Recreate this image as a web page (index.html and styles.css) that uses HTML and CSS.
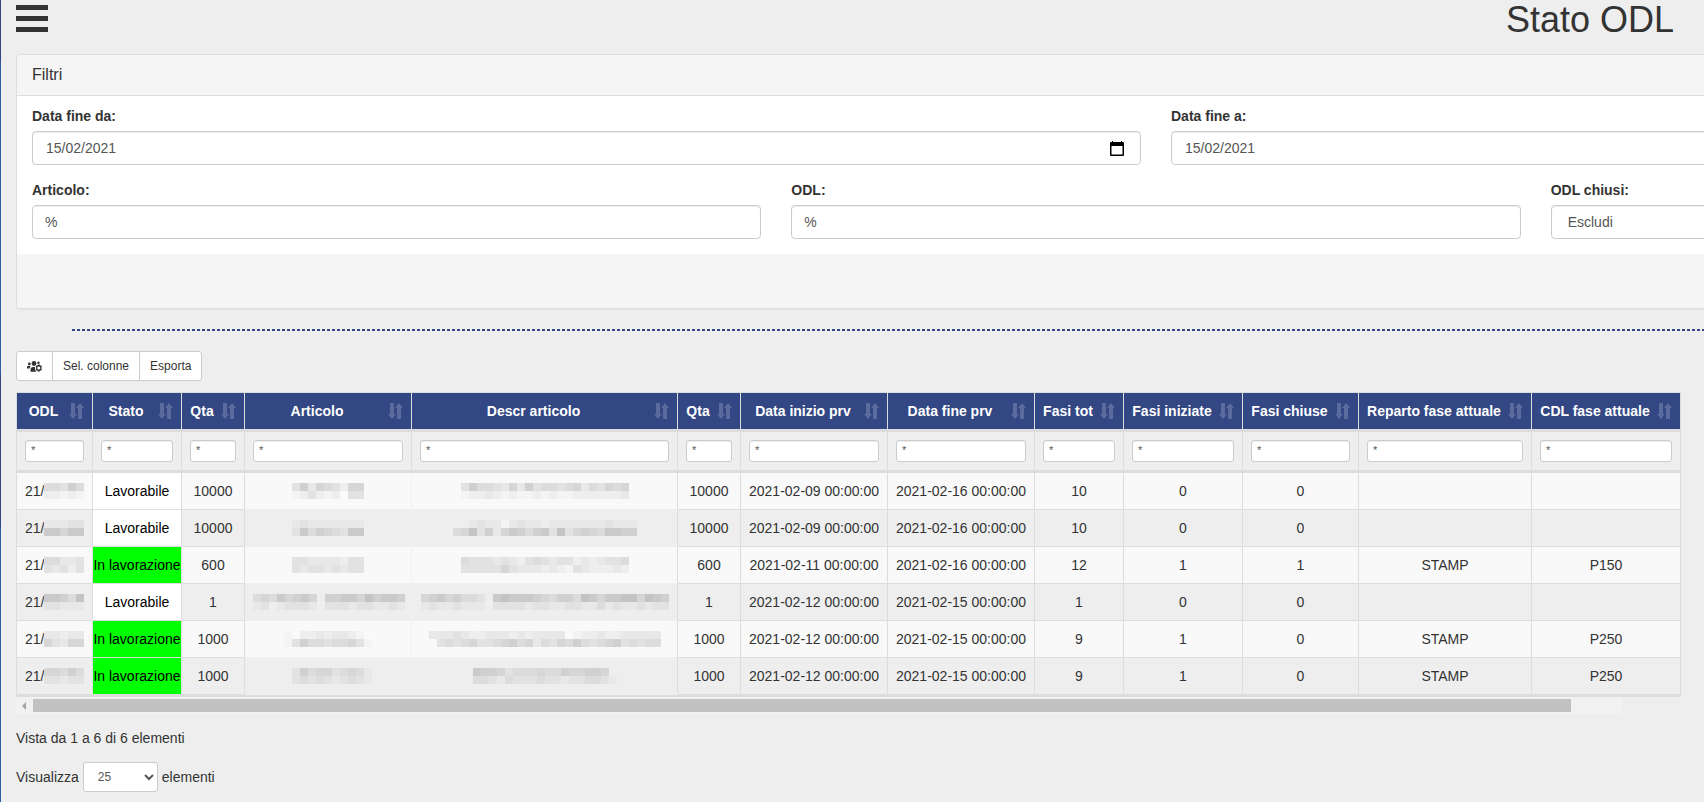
FILE: index.html
```
<!DOCTYPE html>
<html lang="it">
<head>
    <meta charset="UTF-8">
    <meta name="viewport" content="width=device-width, initial-scale=1.0">
    <title>Stato ODL</title>
    <link rel="stylesheet" href="styles.css">
</head>
<body>
    <svg class="sprite" aria-hidden="true">
        <symbol id="icon-sort" viewBox="0 0 15 16">
            <path d="M2 0h4v11h2l-4 5-4-5h2zM9 16V5H7l4-5 4 5h-2v11z"/>
        </symbol>
        <symbol id="icon-calendar" viewBox="0 0 14 15">
            <path d="M2 0h1v1h8V0h1v1h1a1 1 0 0 1 1 1v12a1 1 0 0 1-1 1H1a1 1 0 0 1-1-1V2a1 1 0 0 1 1-1h1zM1.500 5v8.500h11V5z"/>
        </symbol>
    </svg>

    <div class="page">
        <header class="page-header">
            <button type="button" class="menu-toggle" aria-label="Menu">
                <svg width="32" height="28" viewBox="0 0 32 28"><path d="M0 0h32v5H0zM0 11h32v5H0zM0 22h32v5H0z"/></svg>
            </button>
            <h1>Stato ODL</h1>
        </header>

        <!-- Filters -->
        <form class="panel">
            <div class="panel-heading">Filtri</div>
            <div class="panel-body">
                <div class="row">
                    <div class="form-group">
                        <label for="dataDa">Data fine da:</label>
                        <div class="form-control date-control">
                            <input type="text" id="dataDa" value="15/02/2021">
                            <button type="button" aria-label="Apri calendario"><svg width="14" height="15"><use href="#icon-calendar"/></svg></button>
                        </div>
                    </div>
                    <div class="form-group">
                        <label for="dataA">Data fine a:</label>
                        <div class="form-control date-control">
                            <input type="text" id="dataA" value="15/02/2021">
                            <button type="button" aria-label="Apri calendario"><svg width="14" height="15"><use href="#icon-calendar"/></svg></button>
                        </div>
                    </div>
                </div>
                <div class="row">
                    <div class="form-group">
                        <label for="articolo">Articolo:</label>
                        <input type="text" class="form-control" id="articolo" value="%">
                    </div>
                    <div class="form-group">
                        <label for="odl">ODL:</label>
                        <input type="text" class="form-control" id="odl" value="%">
                    </div>
                    <div class="form-group">
                        <label for="chiusi">ODL chiusi:</label>
                        <select class="form-control" id="chiusi">
                            <option>Escludi</option>
                            <option>Includi</option>
                        </select>
                    </div>
                </div>
            </div>
            <div class="panel-footer"></div>
        </form>

        <div class="separator"></div>

        <div class="btn-group">
            <button type="button" aria-label="Impostazioni utenti">
                <svg width="15" height="11" viewBox="0 0 15 11">
                    <circle cx="2.300" cy="3" r="1.400"/>
                    <circle cx="7" cy="2.500" r="2.400"/>
                    <circle cx="11.500" cy="1.800" r="1.200"/>
                    <path d="M0 7.500V6q0-1 1.200-1H3.500L2.700 7.500zM3.500 10.800V8.500q0-2.500 2.300-2.500H8v2.500l1.300 2.300z"/>
                    <path fill-rule="evenodd" d="M10.800 3.500h2l.2 1 1-.3 1 1.700-.7.800v.6l.7.800-1 1.700-1-.3-.2 1h-2l-.2-1-1 .3-1-1.700.7-.8v-.6l-.7-.8 1-1.700 1 .3zM11.800 5.400a1.600 1.600 0 1 0 0 3.200 1.600 1.600 0 1 0 0-3.200z"/>
                </svg>
            </button>
            <button type="button">Sel. colonne</button>
            <button type="button">Esporta</button>
        </div>

        <table class="odl-table" id="odlTable">
            <colgroup>
                <col class="c-odl"><col class="c-stato"><col class="c-qta"><col class="c-articolo"><col class="c-descr"><col class="c-qta"><col class="c-data"><col class="c-data"><col class="c-tot"><col class="c-iniziate"><col class="c-chiuse"><col class="c-reparto"><col class="c-cdl">
            </colgroup>
            <thead>
                <tr class="titles" id="titles"></tr>
                <tr class="filters" id="filters"></tr>
            </thead>
            <tbody id="odlBody"></tbody>
        </table>
        <div class="scrollbar">
            <span class="scroll-arrow"></span>
            <span class="scroll-thumb"></span>
        </div>

        <p class="table-info">Vista da 1 a 6 di 6 elementi</p>
        <div class="table-length">
            <label for="length">Visualizza</label>
            <select id="length">
                <option>10</option>
                <option selected>25</option>
                <option>50</option>
            </select>
            <span>elementi</span>
        </div>
    </div>

    <script>
        const columns = ['ODL', 'Stato', 'Qta', 'Articolo', 'Descr articolo', 'Qta', 'Data inizio prv', 'Data fine prv',
            'Fasi tot', 'Fasi iniziate', 'Fasi chiuse', 'Reparto fase attuale', 'CDL fase attuale'];

        // odl, articolo and descr are masked: two lines of shades, one digit per tile (0 light, 9 dark)
        const rows = [
            { odl: ['55475', '22121'], green: false, qta: 10000, articolo: ['473654266', '124212044'],
              descr: ['475543637455456354656', '122321211212112222223'], start: '2021-02-09', end: '2021-02-16', phases: [10, 0, 0], dept: '', cdl: '' },
            { odl: ['33344', '88688'], green: false, qta: 10000, articolo: ['343333333', '485765488'],
              descr: ['.2343313433233333334333', '56947368757849467658877'], start: '2021-02-09', end: '2021-02-16', phases: [10, 0, 0], dept: '', cdl: '' },
            { odl: ['55334', '43424'], green: true, qta: 600, articolo: ['443333244', '434434344'],
              descr: ['544434324543442323445', '444446433323214322232'], start: '2021-02-11', end: '2021-02-16', phases: [12, 1, 1], dept: 'STAMP', cdl: 'P150' },
            { odl: ['88759', '44333'], green: false, qta: 1, articolo: ['5658678627788697887', '3423444324443443343'],
              descr: ['6786755428988876577598688996987', '3433433324444344334433534334344'], start: '2021-02-12', end: '2021-02-15', phases: [1, 0, 0], dept: '', cdl: '' },
            { odl: ['33233', '64366'], green: true, qta: 1000, articolo: ['10223233210', '14755455641'],
              descr: ['33343223332323333012232233333', '.4545644567563546575456745455'], start: '2021-02-12', end: '2021-02-15', phases: [9, 1, 0], dept: 'STAMP', cdl: 'P250' },
            { odl: ['66575', '44344'], green: true, qta: 1000, articolo: ['24756645653', '.4545434543'],
              descr: ['87764555655766776.', '554354445443445543'], start: '2021-02-12', end: '2021-02-15', phases: [9, 1, 0], dept: 'STAMP', cdl: 'P250' }
        ];

        function mask(lines) {
            const size = 8;
            let tiles = '';
            lines.forEach((line, y) => {
                [...line].forEach((shade, x) => {
                    if (shade === '.') return;
                    const g = 250 - shade * 6;
                    tiles += `<rect x="${x * size}" y="${y * size}" width="${size}" height="${size}" fill="rgb(${g},${g},${g})"/>`;
                });
            });
            return `<svg class="mask" width="${lines[0].length * size}" height="16" aria-hidden="true">${tiles}</svg>`;
        }

        document.getElementById('titles').innerHTML = columns.map(name =>
            `<th scope="col"><div class="title"><span>${name}</span><svg width="15" height="16"><use href="#icon-sort"/></svg></div></th>`
        ).join('');

        document.getElementById('filters').innerHTML = columns.map(name =>
            `<td><input type="text" value="*" aria-label="Filtro ${name}"></td>`
        ).join('');

        document.getElementById('odlBody').innerHTML = rows.map(r => `
            <tr>
                <td class="odl"><div>21/${mask(r.odl)}</div></td>
                <td class="stato ${r.green ? 'in-lavorazione' : ''}">${r.green ? 'In lavorazione' : 'Lavorabile'}</td>
                <td>${r.qta}</td>
                <td class="masked">${mask(r.articolo)}</td>
                <td class="masked last">${mask(r.descr)}</td>
                <td>${r.qta}</td>
                <td>${r.start} 00:00:00</td>
                <td>${r.end} 00:00:00</td>
                ${r.phases.map(n => `<td>${n}</td>`).join('')}
                <td>${r.dept}</td>
                <td>${r.cdl}</td>
            </tr>`).join('');
    </script>
</body>
</html>
```
FILE: styles.css
```
/* General styling */
* {
    box-sizing: border-box;
}

html {
    overflow-x: hidden;
}

body {
    font-family: "Liberation Sans", Arial, sans-serif;
    font-size: 14px;
    line-height: 20px;
    color: #333;
    background-color: #eee;
    margin: 0;
    overflow-x: hidden;
}

input, select, button {
    font-family: inherit;
}

.sprite {
    display: none;
}

/* thin strip of the closed side menu on the left */
.page {
    min-height: 100vh;
    padding: 0 15px 0 16px;
    background: linear-gradient(#334785 0 61px, #2f5ba5 61px 374px, #334785 374px 527px, #2f5ba5 527px) no-repeat left top / 1px 100%;
}

.page-header {
    display: flex;
    justify-content: space-between;
    align-items: flex-start;
    height: 54px;
    padding-right: 15px;
}

.menu-toggle {
    padding: 5px 0 0;
    border: none;
    background: none;
    cursor: pointer;
}

.menu-toggle svg {
    display: block;
    fill: #333;
}

h1 {
    margin: 0;
    font-size: 36px;
    font-weight: normal;
    line-height: 40px;
}

/* Filters panel, wider than the window */
.panel {
    width: calc(100% + 607px);
    border: 1px solid #ddd;
    border-radius: 4px;
    background-color: #fff;
    box-shadow: 0 1px 1px rgba(0, 0, 0, 0.05);
}

.panel-heading {
    padding: 10px 15px;
    font-size: 16px;
    background-color: #f5f5f5;
    border-bottom: 1px solid #ddd;
    border-radius: 3px 3px 0 0;
}

.panel-body {
    padding: 10px 15px 0;
}

.panel-footer {
    height: 54px;
    background-color: #f5f5f5;
    border-radius: 0 0 3px 3px;
}

.row {
    display: flex;
    gap: 30px;
}

.form-group {
    flex: 1;
    margin-bottom: 15px;
}

.form-group label {
    display: block;
    margin-bottom: 5px;
    font-weight: bold;
}

.form-control {
    display: block;
    width: 100%;
    height: 34px;
    padding: 6px 12px;
    font-size: 14px;
    color: #555;
    background-color: #fff;
    border: 1px solid #ccc;
    border-radius: 4px;
    box-shadow: inset 0 1px 1px rgba(0, 0, 0, 0.075);
}

.date-control {
    display: flex;
    align-items: center;
    padding: 0 16px 0 13px;
}

.date-control input {
    flex: 1;
    padding: 0;
    font-size: 14px;
    color: #555;
    border: none;
    background: none;
}

.date-control button {
    padding: 0;
    border: none;
    background: none;
}

.date-control svg {
    display: block;
}

.separator {
    width: calc(100% + 607px);
    height: 2px;
    margin: 20px 0 20px 56px;
    background: repeating-linear-gradient(to right, #334785 0 3px, transparent 3px 5px);
}

/* Toolbar */
.btn-group {
    display: flex;
    margin-bottom: 11px;
}

.btn-group button {
    height: 30px;
    padding: 5px 10px;
    font-size: 12px;
    color: #333;
    background-color: #fff;
    border: 1px solid #ccc;
    cursor: pointer;
}

.btn-group button + button {
    margin-left: -1px;
}

.btn-group button:first-child {
    border-radius: 3px 0 0 3px;
}

.btn-group button:last-child {
    border-radius: 0 3px 3px 0;
}

.btn-group svg {
    display: block;
    fill: #333;
}

/* Table */
.odl-table {
    width: 1665px;
    table-layout: fixed;
    border-collapse: separate;
    border-spacing: 0;
    border: solid #ddd;
    border-width: 1px 0 2px 1px;
}

.c-odl { width: 76px; }
.c-stato { width: 89px; }
.c-qta { width: 63px; }
.c-articolo { width: 167px; }
.c-descr { width: 266px; }
.c-data { width: 147px; }
.c-tot { width: 89px; }
.c-iniziate { width: 119px; }
.c-chiuse { width: 116px; }
.c-reparto { width: 173px; }
.c-cdl { width: 149px; }

th, td {
    padding: 8px;
    text-align: center;
    white-space: nowrap;
    border-right: 1px solid #ddd;
    border-bottom: 1px solid #ddd;
}

.titles th {
    color: #fff;
    background-color: #334785;
    border-bottom-width: 3px;
}

.title {
    display: flex;
    align-items: center;
    gap: 7px;
}

.title span {
    flex: 1;
}

.title svg {
    flex: none;
    fill: rgba(255, 255, 255, 0.2);
}

.filters td {
    border-bottom-width: 3px;
}

.filters input {
    display: block;
    width: 100%;
    height: 22px;
    padding: 0 5px 2px;
    font-size: 11px;
    color: #555;
    background-color: #fff;
    border: 1px solid #ccc;
    border-radius: 3px;
    box-shadow: inset 0 1px 1px rgba(0, 0, 0, 0.075);
}

tbody tr:nth-child(odd) {
    background-color: #f9f9f9;
}

tbody td {
    height: 37px;
}

.odl div {
    display: flex;
    align-items: center;
}

.mask {
    display: block;
    flex: none;
    margin: 0 auto;
    shape-rendering: crispEdges;
}

.odl .mask {
    margin: 0;
}

tbody .stato {
    padding: 8px 0;
    color: #000;
    background-color: #fff;
}

tbody .in-lavorazione {
    background-color: #0f0;
}

.masked {
    border-color: #f0f0f0;
}

.masked.last {
    border-right-color: #ddd;
}

/* Horizontal scrollbar */
.scrollbar {
    display: flex;
    align-items: center;
    width: 96%;
    height: 17px;
    background-color: #f1f1f1;
}

.scroll-arrow {
    margin: 0 7px 0 6px;
    border: solid transparent;
    border-width: 4px 4px 4px 0;
    border-right-color: #a3a3a3;
}

.scroll-thumb {
    flex: none;
    width: calc(100% - 68px);
    height: 13px;
    background-color: #c1c1c1;
}

/* Table footer */
.table-info {
    margin: 14px 0;
}

.table-length {
    display: flex;
    align-items: center;
    gap: 4px;
}

.table-length select {
    width: 75px;
    height: 30px;
    padding: 5px 10px;
    font-size: 12px;
    color: #555;
    background-color: #fff;
    border: 1px solid #ccc;
    border-radius: 3px;
}
```
